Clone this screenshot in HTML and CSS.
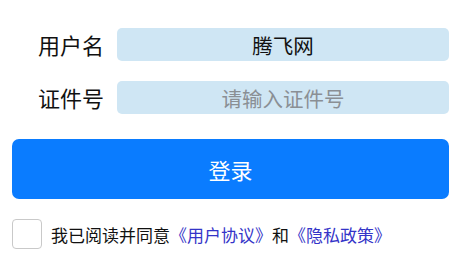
FILE: index.html
```html
<!DOCTYPE html>
<html lang="zh">
<head>
<meta charset="utf-8">
<link rel="stylesheet" href="styles.css">
</head>
<body>
<div class="page">
  <div class="row first">
    <label class="label">用户名</label>
    <div class="field"><span class="value">腾飞网</span></div>
  </div>
  <div class="row second">
    <label class="label">证件号</label>
    <div class="field"><span class="placeholder">请输入证件号</span></div>
  </div>
  <button class="login">登录</button>
  <div class="agree">
    <span class="checkbox"></span>
    <span class="agree-text">我已阅读并同意<a class="link">《用户协议》</a>和<a class="link">《隐私政策》</a></span>
  </div>
</div>
</body>
</html>
```
FILE: styles.css
```css
* { box-sizing: border-box; }
html, body { margin: 0; padding: 0; background: #fff; }
body {
  width: 460px;
  height: 268px;
  overflow: hidden;
  font-family: "Noto Sans CJK SC", "Noto Sans", sans-serif;
  color: #111;
}
.page {
  padding: 28px 11px 0 12px;
  display: flex;
  flex-direction: column;
}
.row {
  display: flex;
  align-items: center;
  height: 33px;
}
.second { margin-top: 20px; }
.label {
  width: 92px;
  text-align: right;
  font-size: 22px;
  line-height: 33px;
  margin-right: 13px;
  color: #111;
}
.field {
  flex: 1;
  height: 33px;
  background: #cfe6f4;
  border-radius: 5px;
  display: flex;
  align-items: center;
  justify-content: center;
  font-size: 20.5px;
}
.value { color: #111; }
.placeholder { color: #8a8f94; }
.login {
  margin-top: 25px;
  height: 60px;
  border: none;
  border-radius: 7px;
  background: #0a7cff;
  color: #fff;
  font-family: inherit;
  font-size: 22px;
  padding: 0;
}
.agree {
  margin-top: 20px;
  display: flex;
  align-items: center;
}
.checkbox {
  width: 30px;
  height: 30px;
  border: 1px solid #c9c9c9;
  border-radius: 4px;
  background: #fff;
  margin-right: 9px;
}
.agree-text {
  font-size: 17px;
  color: #111;
}
.link { color: #3434c8; }
```
